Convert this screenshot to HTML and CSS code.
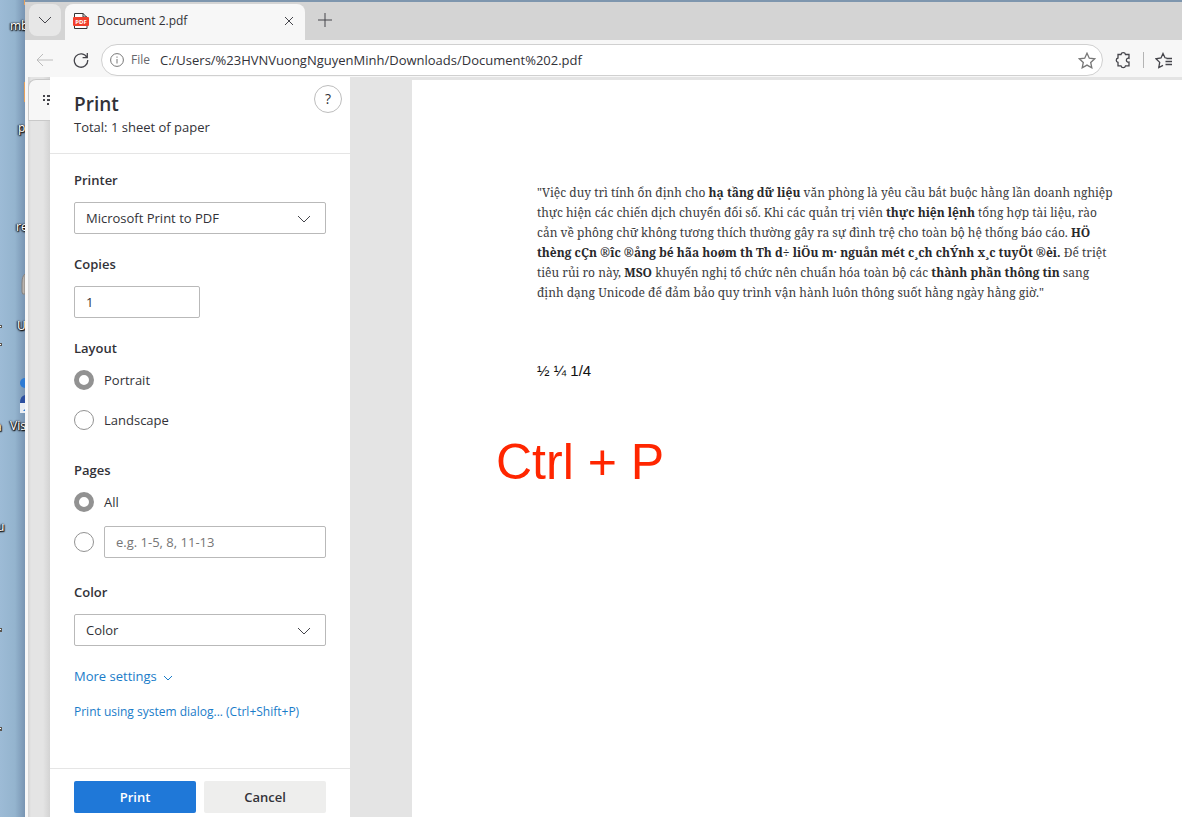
FILE: index.html
```html
<!DOCTYPE html>
<html lang="en">
<head>
<meta charset="utf-8">
<title>Document 2.pdf</title>
<link rel="stylesheet" href="styles.css">
</head>
<body>
<div class="screen">
  <aside class="desktop" aria-label="Desktop">
    <span class="shortcut" style="left:10px;top:18px">mb</span>
    <span class="shortcut" style="left:18px;top:120px">p</span>
    <span class="shortcut" style="left:16px;top:219px">re</span>
    <span class="shortcut" style="left:17px;top:318px">U</span>
    <span class="shortcut" style="left:10px;top:418px">Vis</span>
    <span class="shortcut" style="left:-3px;top:519px">u</span>
    <span class="shortcut" style="left:-5px;top:419px">a</span>
    <svg class="desktop-art" width="25" height="817" viewBox="0 0 25 817" aria-hidden="true">
      <path d="M24 0h1v5h-1zM24 82h1v20h-1z" fill="#e5a05c"/>
      <path d="M25 274q-3 2-3 9v9q0 3 3 2z" fill="#b9b3ad" stroke="#85827f"/>
      <circle cx="25" cy="383" r="5" fill="#2d7bd4"/>
      <path d="M25 395q-5 1-5 8h5z" fill="#2c4fa0"/>
      <path d="M20 403h5v10h-5z" fill="#e9edf3"/>
      <path d="M23 411l2-2v2z" fill="#2d7bd4"/>
      <path d="M0 325h2v3H0zM0 343h2v3H0zM0 628h2v4H0zM0 727h2v4H0z" fill="#5a5550"/>
      <path d="M0 326h1v1H0zM0 344h1v1H0zM0 629h1v1H0zM0 728h1v1H0z" fill="#fff"/>
    </svg>
  </aside>
  <main class="window">
    <header class="tabbar">
      <button class="tab-menu" aria-label="Tab actions"><svg width="14" height="8" viewBox="0 0 14 8"><path d="M1 1l6 6 6-6"/></svg></button>
      <div class="tab">
        <svg class="pdf" width="16" height="18" viewBox="0 0 16 18" aria-hidden="true">
          <path d="M1.500 1.500h8.500l4 4v11H1.500z" fill="#fff" stroke="#333"/><path d="M10 1v4h4" fill="none" stroke="#333"/>
          <rect x="0" y="5" width="16" height="9" rx="1" fill="#f1402c" stroke="none"/>
          <text x="8" y="12" text-anchor="middle">PDF</text>
        </svg>
        <span class="tab-title">Document 2.pdf</span>
        <button class="bare" aria-label="Close tab"><svg width="10" height="10" viewBox="0 0 10 10"><path d="M1 1l8 8M9 1l-8 8"/></svg></button>
      </div>
      <button class="bare new-tab" aria-label="New tab"><svg width="16" height="16" viewBox="0 0 16 16"><path d="M8 1v14M1 8h14"/></svg></button>
    </header>
    <nav class="toolbar">
      <button class="bare back" aria-label="Back"><svg width="18" height="14" viewBox="0 0 18 14"><path d="M7 1L1 7l6 6M1 7h16"/></svg></button>
      <button class="bare reload" aria-label="Reload"><svg width="16" height="16" viewBox="0 0 16 16"><path d="M14 5.500A6.700 6.700 0 1 0 14.700 8M14.300 1v4.700H9.600"/></svg></button>
      <div class="address">
        <svg class="info" width="14" height="14" viewBox="0 0 14 14" aria-hidden="true"><circle cx="7" cy="7" r="6.400"/><path d="M7 6v4.500M7 3.500v1.300"/></svg>
        <span class="scheme">File</span>
        <input class="url" aria-label="Address" value="C:/Users/%23HVNVuongNguyenMinh/Downloads/Document%202.pdf">
        <button class="bare star" aria-label="Add to favorites"><svg width="18" height="17" viewBox="0 0 18 17"><path d="M9 1.200l2.300 5 5.400.6-4 3.700 1.100 5.300L9 13.100l-4.800 2.700 1.100-5.300-4-3.700 5.400-.6z"/></svg></button>
      </div>
      <button class="bare ext" aria-label="Extensions"><svg width="16" height="18" viewBox="0 0 16 18"><path d="M3 3.500h3a2.300 2.300 0 0 1 4.500 0h3.500v3.800a2 2 0 1 0 0 3.800v3.700h-3.500a2.300 2.300 0 0 1-4.500 0H3v-3.500a2.200 2.200 0 0 1 0-4.300z"/></svg></button>
      <span class="divider"></span>
      <button class="bare favs" aria-label="Favorites"><svg width="18" height="17" viewBox="0 0 18 17"><path d="M12 6.200L10 5.800 8 1.500 6 6 1 6.800l3.700 3.600L3.800 15.500 8 13.300M11.500 6.500H17M10.500 9.500H17M10.500 12.500H17"/></svg></button>
    </nav>
    <div class="content">
      <div class="viewer-edge"><div class="viewer-tools"><svg width="7" height="12" viewBox="0 0 7 12" aria-hidden="true"><path d="M0 1h2M4 1h3M0 5h2M4 5h3M4 9h2"/></svg></div></div>
      <form class="dialog" onsubmit="return false">
        <div class="dialog-head">
          <div><h1>Print</h1><p>Total: 1 sheet of paper</p></div>
          <button class="help" type="button" aria-label="Help">?</button>
        </div>
        <div class="dialog-body">
          <div class="field">
            <label for="printer">Printer</label>
            <div class="select"><select id="printer"><option>Microsoft Print to PDF</option></select><svg width="14" height="8" viewBox="0 0 14 8"><path d="M1 1l6 6 6-6"/></svg></div>
          </div>
          <div class="field">
            <label for="copies">Copies</label>
            <input class="box copies" id="copies" type="text" inputmode="numeric" value="1">
          </div>
          <fieldset>
            <legend>Layout</legend>
            <label class="radio"><input type="radio" name="layout" checked>Portrait</label>
            <label class="radio"><input type="radio" name="layout">Landscape</label>
          </fieldset>
          <fieldset>
            <legend>Pages</legend>
            <label class="radio"><input type="radio" name="pages" checked>All</label>
            <div class="radio"><input type="radio" name="pages" aria-label="Page range"><input class="box" type="text" aria-label="Pages to print" placeholder="e.g. 1-5, 8, 11-13"></div>
          </fieldset>
          <div class="field">
            <label for="color">Color</label>
            <div class="select"><select id="color"><option>Color</option></select><svg width="14" height="8" viewBox="0 0 14 8"><path d="M1 1l6 6 6-6"/></svg></div>
          </div>
          <button class="more" type="button">More settings <svg width="10" height="6" viewBox="0 0 10 6"><path d="M1 1l4 4 4-4"/></svg></button>
          <a class="system" href="#">Print using system dialog... (Ctrl+Shift+P)</a>
        </div>
        <div class="dialog-foot">
          <button class="primary" type="submit">Print</button>
          <button type="button">Cancel</button>
        </div>
      </form>
      <article class="sheet" lang="vi">
        <p class="para">"Việc duy trì tính ổn định cho <b>hạ tầng dữ liệu</b> văn phòng là yêu cầu bắt buộc hằng lần doanh nghiệp<br>
          thực hiện các chiến dịch chuyển đổi số. Khi các quản trị viên <b>thực hiện lệnh</b> tổng hợp tài liệu, rào<br>
          cản về phông chữ không tương thích thường gây ra sự đình trệ cho toàn bộ hệ thống báo cáo. <b>HÖ</b><br>
          <b>thèng cÇn ®îc ®ång bé hãa hoøm th Th d÷ liÖu m· nguån mét c¸ch chÝnh x¸c tuyÖt ®èi.</b> Để triệt<br>
          tiêu rủi ro này, <b>MSO</b> khuyến nghị tổ chức nên chuẩn hóa toàn bộ các <b>thành phần thông tin</b> sang<br>
          định dạng Unicode để đảm bảo quy trình vận hành luôn thông suốt hằng ngày hằng giờ."</p>
        <p class="fractions">½ ¼ 1/4</p>
        <p class="note">Ctrl + P</p>
      </article>
    </div>
  </main>
</div>
</body>
</html>
```
FILE: styles.css
```css
* { box-sizing: border-box; }
body { margin: 0; font: 13px/20px "Open Sans", "Noto Sans", sans-serif; color: #323238; }
h1, p { margin: 0; }
button, input, select { font: inherit; color: inherit; }
button { border: 0; padding: 0; cursor: pointer; }
svg { display: block; fill: none; stroke: #45454b; flex: none; }
.screen { display: flex; min-height: 100vh; }

.desktop { position: relative; flex: none; width: 25px; overflow: hidden; background: linear-gradient(90deg, #9dbbd6 0, #94b4ce 60%, #7894b2 100%); }
.shortcut { position: absolute; font-size: 12px; line-height: 16px; color: #fff; text-shadow: 0 0 2px #111, 1px 1px 1px #111, -1px 0 1px #333, 0 1px 2px #222; }
.desktop-art { position: absolute; left: 0; top: 0; stroke: none; }

.window { flex: 1; min-width: 0; display: flex; flex-direction: column; background: #f7f7f7; }
.tabbar { display: flex; height: 40px; padding-left: 4px; background: #d4d4d4; border-top: 2px solid #7e96ae; }
.tab-menu { width: 32px; height: 32px; margin: 2px 4px 0 0; border-radius: 8px; background: #e7e7e7; display: grid; place-items: center; }
.tab { display: flex; align-items: center; width: 240px; margin-top: 2px; padding: 0 11px 2px 8px; border-radius: 8px 8px 0 0; background: #f7f7f7; font-size: 12px; }
.tab-title { flex: 1; padding-left: 8px; }
.pdf text { font: bold 6px "Open Sans", sans-serif; fill: #fff; stroke: none; }
.bare { background: none; display: grid; place-items: center; flex: none; }
.new-tab { width: 40px; height: 36px; }
.toolbar { display: flex; align-items: center; height: 37px; padding: 3px 9px 0 10px; }
.back svg { stroke: #bcbcbc; }
.back { width: 20px; }
.reload { width: 16px; margin: 0 12px 0 18px; }
.reload svg, .star svg, .ext svg, .favs svg { stroke-width: 1.300; }
.address { flex: 1; display: flex; align-items: center; height: 32px; padding: 0 6px 0 8px; border: 1px solid #d0d0d0; border-radius: 16px; background: #fff; }
.info { stroke: #777; }
.scheme { width: 36px; padding-left: 7px; font-size: 12px; color: #66666b; }
.url { flex: 1; min-width: 0; padding: 0; border: 0; outline: 0; background: none; font-size: 13px; }
.star svg { stroke: #777; }
.ext { margin-left: 12px; }
.divider { width: 1px; height: 16px; margin: 0 11px 0 12px; background: #b4b4b4; }

.content { flex: 1; display: flex; background: #e4e4e4; }
.viewer-edge { flex: none; width: 25px; padding: 2px 0 0 3px; background: linear-gradient(90deg, #f7f7f7 3px, #d2d2d2 3px, #e4e4e4 6px, #e4e4e4 18px, #d3d3d3); }
.viewer-tools { height: 42px; padding: 15px 0 0 14px; border: 1px solid #c9c9c9; border-right: 0; border-top-left-radius: 8px; background: #f7f7f7; }
.viewer-tools svg { stroke-width: 2; }
.dialog { flex: none; width: 300px; display: flex; flex-direction: column; background: #fff; }
.dialog-head { display: flex; justify-content: space-between; padding: 15px 8px 16px 24px; border-bottom: 1px solid #e5e5e5; }
.dialog-head div { line-height: 20px; }
h1 { font-size: 19px; line-height: 25px; font-weight: 600; }
.help { width: 28px; height: 28px; margin-top: -7px; border: 1px solid #bdbdbd; border-radius: 50%; background: #fff; font-size: 14px; }
.dialog-body { flex: 1; display: flex; flex-direction: column; align-items: stretch; gap: 20px; padding: 16px 24px; }
.field { display: grid; gap: 12px; }
.field label, legend { font-weight: 600; padding: 0; }
.select { position: relative; }
.select select { width: 100%; appearance: none; }
.select select, .box { height: 32px; padding: 0 11px; border: 1px solid #b9b9b9; border-radius: 2px; background: #fff; }
.select svg { position: absolute; right: 15px; top: 13px; pointer-events: none; }
.box { min-width: 0; flex: 1; }
.box::placeholder { color: #767676; opacity: 1; }
.copies { width: 126px; }
fieldset { margin: 0 0 4px; padding: 0; border: 0; min-width: 0; }
legend { margin-bottom: 6px; }
.radio { display: flex; align-items: center; gap: 10px; height: 32px; }
.radio + .radio { margin-top: 8px; }
.radio input[type="radio"] { appearance: none; flex: none; width: 20px; height: 20px; margin: 0; border: 1px solid #929292; border-radius: 50%; background: #fff; }
.radio input[type="radio"]:checked { border: 5px solid #929292; }
.more { display: flex; align-items: center; gap: 6px; background: none; color: #1a7cc9; }
.more svg { stroke: #1a7cc9; margin-top: 4px; }
.system { margin-top: -4px; font-size: 12px; color: #1a7cc9; text-decoration: none; }
.dialog-foot { display: flex; gap: 8px; padding: 12px 24px 4px; border-top: 1px solid #e5e5e5; }
.dialog-foot button { flex: 1; height: 32px; border-radius: 2px; background: #eeeeed; font-weight: 600; }
.dialog-foot .primary { background: #1f78d8; color: #fff; }

.sheet { flex: 1; min-width: 0; margin: 3px 0 0 62px; padding: 103px 24px 0 125px; background: #fff; }
.para { font: 12px/20px "Noto Serif", Cambria, "Liberation Serif", serif; white-space: nowrap; color: #3c3c3e; }
.para b { color: #29292b; }
.fractions { margin-top: 58px; font: 15px/20px "Liberation Sans", sans-serif; color: #111; }
.note { margin: 51px 0 0 -41px; font: 50px/60px "Liberation Sans", sans-serif; color: #ff2600; }
```
